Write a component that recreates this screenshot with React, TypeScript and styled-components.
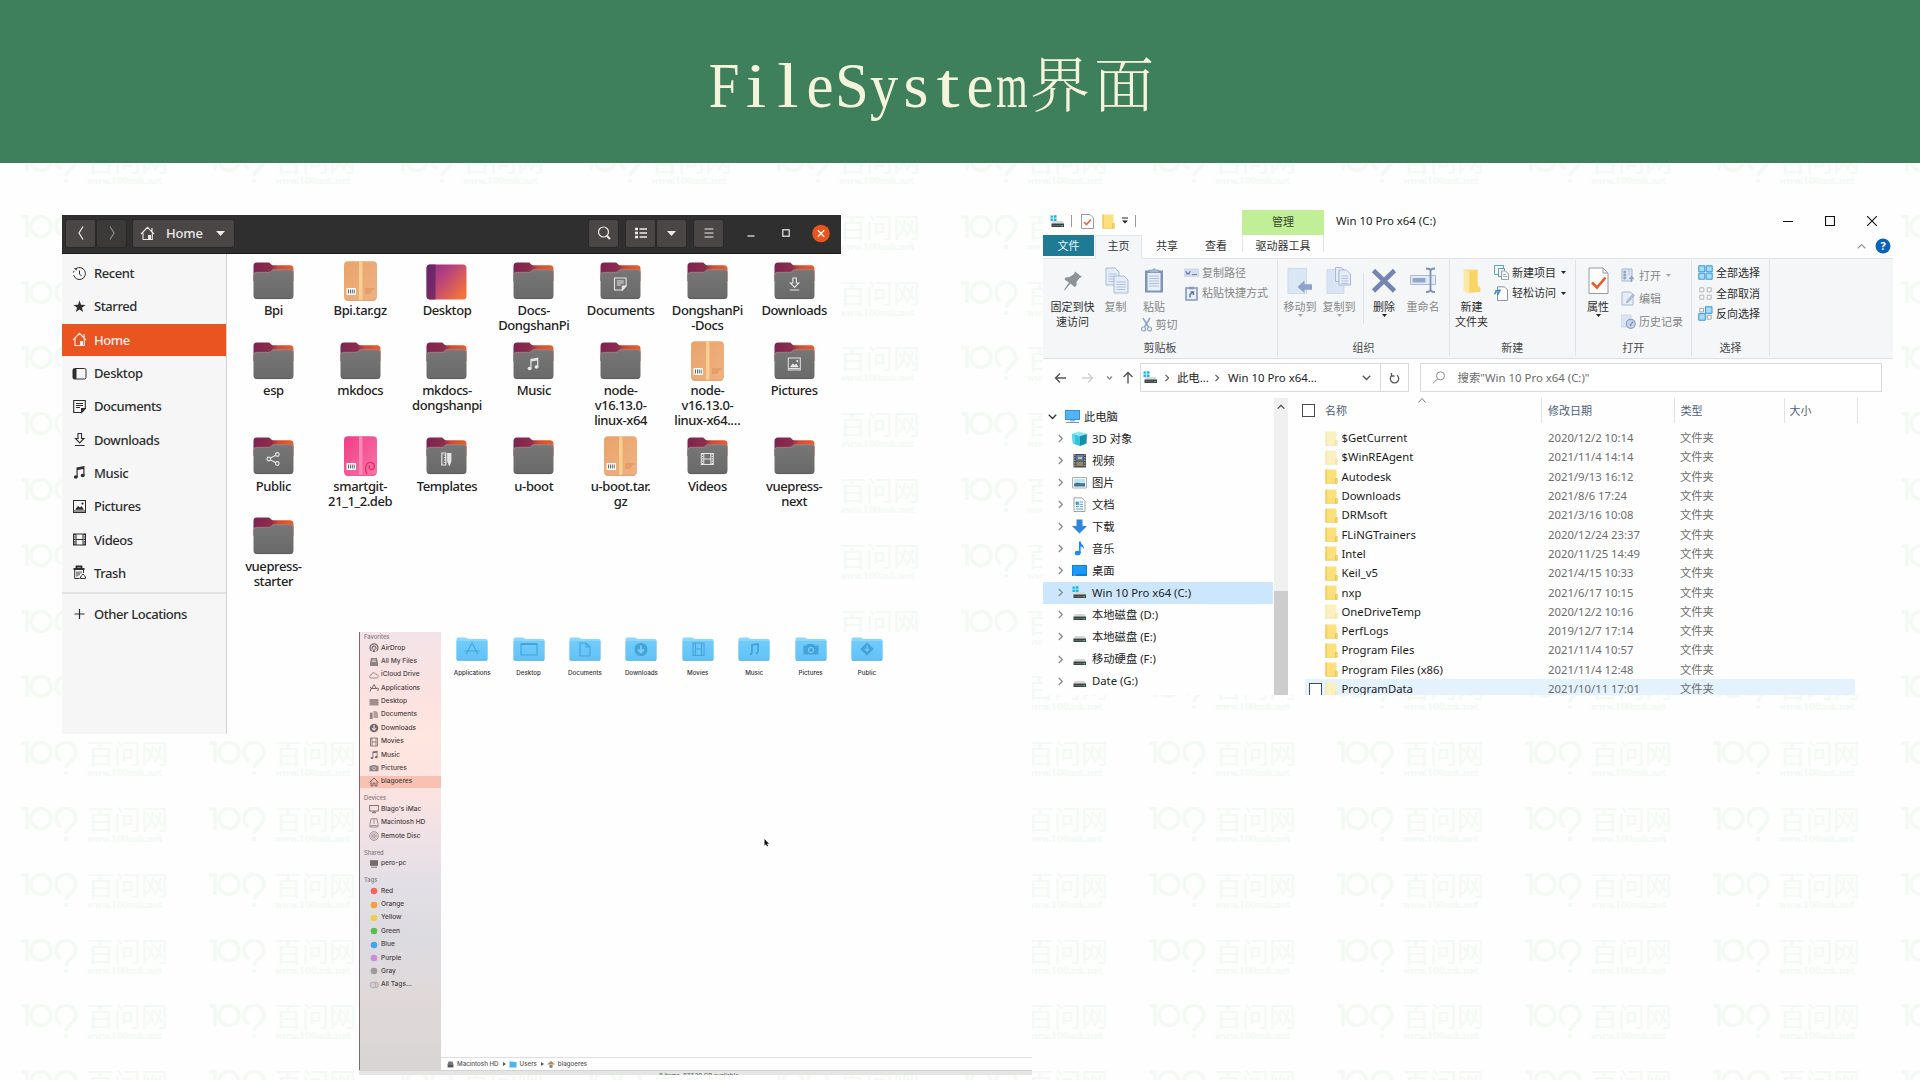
import React from "react";
import styled, { createGlobalStyle } from "styled-components";

const ui = `"Noto Sans", "Noto Sans CJK SC", sans-serif`;
const cjk = `"Noto Sans CJK SC", "Noto Sans", sans-serif`;

const Global = createGlobalStyle`
  * { box-sizing: border-box; }
  body { margin: 0; background: #fefefe; }
  svg { display: block; flex: none; }
`;

const Slide = styled.div`
  position: relative;
  width: 1920px;
  height: 1080px;
  overflow: hidden;
  background: #fefefe;
`;

/* ---------- slide header ---------- */

const Banner = styled.header`
  position: relative;
  height: 163px;
  padding: 46px 0 0 708px;
  background: #3e805b;
  color: #f6f3dc;
  white-space: nowrap;
`;
const Title = styled.h1`
  margin: 0;
  font: 400 64px/80px "Liberation Serif", serif;
  display: flex;
`;
const Letter = styled.span<{ $squeeze?: number }>`
  width: 32px;
  display: flex;
  justify-content: center;
  transform: scaleX(${(p) => p.$squeeze ?? 1});
`;
const Hanzi = styled.span`
  font-family: "Noto Serif CJK SC", "Noto Sans CJK SC", serif;
  font-weight: 300;
  font-size: 60px;
  letter-spacing: 4px;
  margin: -5px 0 0 2px;
`;
const squeeze: Record<string, number> = { F: 0.86, S: 0.95, m: 0.63, y: 0.88, e: 0.95, i: 1.15, l: 1.2, t: 1.3 };

/* ---------- watermark ---------- */

const MarkLayer = styled.div`
  position: absolute;
  left: 21px;
  top: 149px;
  display: grid;
  grid-template-columns: repeat(11, 188px);
  grid-auto-rows: 65.8px;
  color: #f3f9f3;
`;
const Mark = styled.div`
  display: flex;
  gap: 8px;
  white-space: nowrap;
`;
const MarkText = styled.div`
  display: flex;
  flex-direction: column;
  b { font: 400 27px/24px "Noto Sans CJK SC", sans-serif; }
  small { font: 700 9px/11px "DejaVu Serif", serif; letter-spacing: -0.4px; margin-top: 3px; }
`;

const covered = (x1: number, x2: number, y: number) =>
  x1 >= 1920 ||
  (x1 >= 62 && x2 <= 841 && y > 190 && y + 36 < 734) ||
  (x1 >= 359 && x2 <= 1032 && y > 632 && y + 36 < 1075) ||
  (x1 >= 1043 && x2 <= 1893 && y > 190 && y + 36 < 695);

function Watermark() {
  const cells = [];
  for (let r = 0; r < 15; r++)
    for (let c = 0; c < 11; c++) {
      const x = 21 + c * 188;
      const y = 149 + r * 65.8;
      cells.push(
        <Mark key={r + "-" + c}>
          {!covered(x, x + 58, y) || !covered(x + 66, x + 147, y) ? (
            <svg width="58" height="36" viewBox="0 0 58 36" fill="none" stroke="currentColor" strokeWidth="3.6">
              <path d="M0 2H6V22" />
              <circle cx="20" cy="11.5" r="10" />
              <path d="M40 20A10 10 0 1 1 55 12C54.500 19 46 20 45 27" />
              <path d="M43 32H47" />
            </svg>
          ) : null}
          {!covered(x + 66, x + 147, y) && (
            <MarkText>
              <b>百问网</b>
              <small>www.100ask.net</small>
            </MarkText>
          )}
        </Mark>
      );
    }
  return <MarkLayer>{cells}</MarkLayer>;
}

const Window = styled.section<{ $x: number; $y: number; $w: number; $h: number }>`
  position: absolute;
  left: ${(p) => p.$x}px;
  top: ${(p) => p.$y}px;
  width: ${(p) => p.$w}px;
  height: ${(p) => p.$h}px;
  overflow: hidden;
  background: #fefefe;
  display: flex;
  flex-direction: column;
  white-space: nowrap;
`;

/* ---------- Nautilus ---------- */

const NBar = styled.div`
  height: 39px;
  flex: none;
  background: #302f2f;
  border-bottom: 1px solid #1b1a1a;
  display: flex;
  align-items: flex-start;
  padding: 3.5px 11px 0 3px;
`;
const NBtn = styled.div<{ $w: number; $dim?: boolean; $gap?: number }>`
  width: ${(p) => p.$w}px;
  height: 29px;
  margin-left: ${(p) => p.$gap ?? 0}px;
  border-radius: 3px;
  background: ${(p) => (p.$dim ? "#3c3939" : "#4a4646")};
  border: 1px solid #292727;
  color: ${(p) => (p.$dim ? "#8f8d8d" : "#eceaea")};
  display: flex;
  align-items: center;
  justify-content: center;
`;
const PathBtn = styled(NBtn)`
  justify-content: flex-start;
  padding-left: 7px;
  font: 500 13px/26px ${ui};
  letter-spacing: -0.2px;
  span { width: 50px; margin-left: 11px; padding-bottom: 1px; }
`;
const NSpace = styled.div`flex: 1;`;
const NCtl = styled.div<{ $w: number }>`
  width: ${(p) => p.$w}px;
  height: 29px;
  display: flex;
  align-items: center;
  justify-content: center;
  color: #eee;
`;
const NBody = styled.div`
  flex: 1;
  display: flex;
  min-height: 0;
`;
const NSide = styled.nav`
  width: 165px;
  background: #f6f6f6;
  border-right: 1px solid #d4d4d4;
  padding-top: 2.500px;
  font: 500 13px/16px ${ui};
  letter-spacing: -0.42px;
  color: #333;
`;
const NItem = styled.div<{ $on?: boolean }>`
  height: 33.3px;
  padding-left: 10px;
  display: flex;
  align-items: center;
  gap: 7px;
  color: ${(p) => (p.$on ? "#fdeee8" : "#2e2e2e")};
  background: ${(p) => (p.$on ? "linear-gradient(#e95420,#e95420) 0 50%/100% 32px no-repeat" : "none")};
`;
const NRule = styled.div`
  height: 2px;
  margin: 2.500px 0 3px;
  background: #e4e4e4;
`;
const NGrid = styled.div`
  padding: 6.5px 0 0 3px;
  display: grid;
  grid-template-columns: repeat(7, 86.8px);
  grid-auto-rows: max-content;
  row-gap: 7.800px;
`;
const NFile = styled.div`
  display: flex;
  flex-direction: column;
  align-items: center;
`;
const NLabel = styled.div`
  margin-top: 2.500px;
  font: 500 13px/15px ${ui};
  letter-spacing: -0.4px;
  color: #222;
  text-align: center;
  white-space: pre;
`;

const glyphs: Record<string, React.ReactNode> = {
  recent: (<g fill="none" stroke="currentColor"><path d="M4 2.600A6 6 0 1 1 1.600 9M1.400 6.500 2 4.800" /><path d="M7.500 4.500V8L9.500 10" /><path d="M2 2.200 4.600 2v2.800z" fill="currentColor" stroke="none" /></g>),
  star: <path d="M7.500 1.500 9 5.800l4.500.1-3.600 2.800 1.300 4.400-3.700-2.600-3.700 2.600 1.300-4.400L1.500 5.900 6 5.800z" fill="currentColor" />,
  home: (<g fill="none" stroke="currentColor" strokeWidth="1.1"><path d="M1 8 7.500 1.300 14 8M3 6.500V13.500H8M12.300 6.500V13.500H11M12 2v3.500" /><path d="M8 9h3v5H8z" fill="currentColor" stroke="none" /></g>),
  desktop: (<g><rect x="1" y="2.500" width="13" height="10.500" rx="1.500" fill="none" stroke="currentColor" /><path d="M1 3h3.500v10H1z" fill="currentColor" /></g>),
  documents: (<g fill="none" stroke="currentColor" strokeWidth="1.1"><path d="M1.700 1.500h11.600v8L9.500 13.500H1.700z" /><path d="M4 4.500h7M4 6.500h7M4 8.500h4" /><path d="M13 9.500H9.500v4z" fill="currentColor" /></g>),
  downloads: (<g fill="none" stroke="currentColor" strokeWidth="1.100"><path d="M6 1.500h3.500v5H12L7.700 11 3.500 6.500H6zM3 13.500h9.500" /></g>),
  music: (<g fill="currentColor"><path d="M4.500 2.500 12.500 1v9.500h-1.200V4L5.700 5v7H4.500z" /><ellipse cx="3.800" cy="12" rx="2" ry="1.700" /><ellipse cx="10.700" cy="10.500" rx="2" ry="1.700" /></g>),
  pictures: (<g><rect x="1.500" y="1.500" width="12" height="12" fill="none" stroke="currentColor" /><path d="M3.500 10 6 7l2 1.500L9.500 7l2 3v.8h-8z" fill="currentColor" /><circle cx="10.500" cy="4.600" r="1.100" fill="currentColor" /><path d="M2 12h11" stroke="currentColor" /></g>),
  videos: (<g fill="none" stroke="currentColor"><rect x="1.500" y="2" width="12" height="11" /><path d="M4 2v11M11 2v11M4 7.500h7" /><path d="M2.700 2v11M12.400 2v11" strokeDasharray="1.200 1.200" strokeWidth="1.400" /></g>),
  trash: (<g fill="none" stroke="currentColor"><path d="M1.500 4h11M4.500 3V1.500h5V3" strokeWidth="1.800" /><path d="M2.700 5v8.500h5M11.500 5v3M5 6.500v5M7 6.500v4M9 6.500v2" /><path d="M8.500 13.500C8 11 10 11 11 9c1 2 3 2 2.500 4.500z" /></g>),
  plus: <path d="M7.500 3v10M2.500 8h10" stroke="currentColor" fill="none" strokeWidth="1.200" />,
  share: (<g fill="none" stroke="currentColor" strokeWidth="1.200"><circle cx="3" cy="7.500" r="1.800" /><circle cx="11.500" cy="3" r="1.800" /><circle cx="11.500" cy="12" r="1.800" /><path d="M4.700 6.500 10 3.800M4.700 8.500 10 11.300" /></g>),
  templates: (<g fill="none" stroke="currentColor" strokeWidth="1.200"><path d="M3 1.500h4v12H3zM5 3.500h2M5 6h2M5 8.500h2M5 11h2" /><path d="M9 2h3v8l-1.500 3.500L9 10z" fill="currentColor" /></g>),
};
const G = ({ n, s = 15 }: { n: string; s?: number }) => (
  <svg width={s} height={s} viewBox="0 0 15 15">{glyphs[n]}</svg>
);

function UFolder({ emblem }: { emblem?: string }) {
  return (
    <svg width="41" height="40" viewBox="0 0 41 40">
      <path d="M.5 5a3.500 3.500 0 0 1 3.500-3.500h11.500c2 0 2.500 2.800 5 2.800H37a3.500 3.500 0 0 1 3.500 3.500V20H.5z" fill="url(#uback)" />
      <path d="M.5 14.500a3 3 0 0 1 3-3.300H16c2.500 0 2.500-2.700 5-2.700h16.500a3 3 0 0 1 3 3v23a3.500 3.500 0 0 1-3.500 3.500H4A3.500 3.500 0 0 1 .5 34.500z" fill="url(#ufront)" />
      <path d="M1 13.500a2.600 2.600 0 0 1 2.600-2.200H16c2.500 0 2.500-2.600 5-2.600h16.500a3 3 0 0 1 2.800 2" fill="none" stroke="#a98d8d" strokeWidth=".7" />
      <path d="M1.500 36.500Q3 37.600 4.500 37.600h32q2 0 3-1.200" fill="none" stroke="#585858" strokeWidth=".8" />
      {emblem && <g transform="translate(12.800 15.500)" color="#e6e6e6">{glyphs[emblem]}</g>}
    </svg>
  );
}
function Package({ pink }: { pink?: boolean }) {
  return (
    <svg width="41" height="40" viewBox="0 0 41 40">
      <rect x="4" y=".3" width="33" height="39.500" rx="4" fill={pink ? "url(#pkp)" : "url(#pko)"} />
      <rect x="19" y=".3" width="3.500" height="39.500" fill={pink ? "#fa86b4" : "#f8d08f"} />
      <path d="M5.500 38.700q1 .7 3 .7h24q2 0 3-.7" stroke={pink ? "#e0417f" : "#d9935b"} strokeWidth=".7" fill="none" />
      <rect x="6.500" y="27" width="9.500" height="7" fill="#fff" />
      <path d="M8.500 28.500v4M10.500 28.500v4M12.300 28.500v4M14.200 28.500v4" stroke="#555" strokeWidth=".9" />
      {pink ? (
        <path d="M27 38c-3-5-1-12 4-11.500 4 .5 4.500 6 1 7-2.500.5-4-2.500-2-4" fill="none" stroke="#e0306c" strokeWidth="1.300" />
      ) : (
        <path d="M25 28h9.500M25 30h7M25 32h5.500" stroke="#d98a58" strokeWidth=".9" />
      )}
    </svg>
  );
}
const UDesktop = () => (
  <svg width="41" height="40" viewBox="0 0 41 40">
    <rect x=".5" y="3.500" width="40" height="35" rx="3.500" fill="url(#udesk)" />
    <path d="M4 3.500h5.500v35H4A3.500 3.500 0 0 1 .5 35V7A3.500 3.500 0 0 1 4 3.500z" fill="#5e2160" opacity=".75" />
  </svg>
);

const nautilusPlaces = [
  ["recent", "Recent"], ["star", "Starred"], ["home", "Home"], ["desktop", "Desktop"], ["documents", "Documents"],
  ["downloads", "Downloads"], ["music", "Music"], ["pictures", "Pictures"], ["videos", "Videos"], ["trash", "Trash"],
];
const nautilusFiles: [string, string?][] = [
  ["Bpi"], ["Bpi.tar.gz", "pkg"], ["Desktop", "desk"], ["Docs-\nDongshanPi"], ["Documents", "documents"], ["DongshanPi\n-Docs"], ["Downloads", "downloads"],
  ["esp"], ["mkdocs"], ["mkdocs-\ndongshanpi"], ["Music", "music"], ["node-\nv16.13.0-\nlinux-x64"], ["node-\nv16.13.0-\nlinux-x64.…", "pkg"], ["Pictures", "pictures"],
  ["Public", "share"], ["smartgit-\n21_1_2.deb", "deb"], ["Templates", "templates"], ["u-boot"], ["u-boot.tar.\ngz", "pkg"], ["Videos", "videos"], ["vuepress-\nnext"],
  ["vuepress-\nstarter"],
];

function Nautilus() {
  return (
    <Window $x={62} $y={215} $w={779} $h={519}>
      <NBar>
        <NBtn $w={31}><svg width="8" height="14" viewBox="0 0 8 14" fill="none" stroke="currentColor" strokeWidth="1.200"><path d="M6 .5 2 7l4 6.500" /></svg></NBtn>
        <NBtn $w={31} $dim><svg width="8" height="14" viewBox="0 0 8 14" fill="none" stroke="currentColor" strokeWidth="1.200"><path d="M2 .5 6 7l-4 6.500" /></svg></NBtn>
        <PathBtn $w={103} $gap={5}>
          <G n="home" />
          <span>Home</span>
          <svg width="9" height="5" viewBox="0 0 9 5"><path d="M0 0h9L4.500 5z" fill="currentColor" /></svg>
        </PathBtn>
        <NSpace />
        <NBtn $w={31}><svg width="14" height="14" viewBox="0 0 14 14" fill="none" stroke="currentColor" strokeWidth="1.200"><circle cx="6.500" cy="6" r="5" /><path d="m10 10 3 3" strokeWidth="2" /></svg></NBtn>
        <NBtn $w={31} $gap={6}><svg width="12" height="12" viewBox="0 0 12 12" stroke="currentColor"><path d="M0 2h3M0 6h3M0 10h3" strokeWidth="2.600" /><path d="M4.500 2H12M4.500 6H12M4.500 10H12" strokeWidth="1.300" /></svg></NBtn>
        <NBtn $w={31}><svg width="9" height="5" viewBox="0 0 9 5"><path d="M0 0h9L4.500 5z" fill="currentColor" /></svg></NBtn>
        <NBtn $w={31} $gap={6}><svg width="10" height="10" viewBox="0 0 10 10" stroke="currentColor"><path d="M.5 1h9M.5 5h9M.5 9h9" strokeWidth="1.200" /></svg></NBtn>
        <NCtl $w={53}><svg width="8" height="8" viewBox="0 0 8 8"><path d="M.5 7h7" stroke="currentColor" strokeWidth="1.200" /></svg></NCtl>
        <NCtl $w={18}><svg width="8" height="8" viewBox="0 0 8 8"><rect x=".8" y=".8" width="6.400" height="6.400" fill="none" stroke="currentColor" strokeWidth="1.200" /></svg></NCtl>
        <NCtl $w={17} />
        <svg width="18" height="29" viewBox="0 0 18 29"><circle cx="9" cy="14.500" r="8.800" fill="#e95420" /><path d="m5.800 11.300 6.400 6.400m0-6.400-6.400 6.400" stroke="#fff" strokeWidth="1.300" /></svg>
      </NBar>
      <NBody>
        <NSide>
          {nautilusPlaces.map(([i, t]) => (
            <NItem key={t} $on={t === "Home"}><G n={i} />{t}</NItem>
          ))}
          <NRule />
          <NItem><G n="plus" />Other Locations</NItem>
        </NSide>
        <NGrid>
          {nautilusFiles.map(([t, k]) => (
            <NFile key={t}>
              {k === "pkg" ? <Package /> : k === "deb" ? <Package pink /> : k === "desk" ? <UDesktop /> : <UFolder emblem={k} />}
              <NLabel>{t}</NLabel>
            </NFile>
          ))}
        </NGrid>
      </NBody>
    </Window>
  );
}

/* ---------- Finder ---------- */

const FBody = styled.div`
  height: 438px;
  flex: none;
  display: flex;
`;
const FSide = styled.nav`
  width: 82px;
  border-left: 1px solid #7c6a6e;
  padding-top: 1px;
  background: linear-gradient(180deg, #f3e3e8 0, #fbe2e0 60px, #ffe6df 105px, #fde3df 150px, #f4e2e5 190px, #e3dfe6 250px, #dcdbe0 310px, #e0d8d8 370px, #d9d5d5 438px);
  font: 500 6.6px/9px Inter, sans-serif;
  color: #4b4144;
`;
const FHead = styled.div<{ $gap: number }>`
  margin-top: ${(p) => p.$gap}px;
  height: 9.500px;
  padding-left: 4px;
  font-size: 5.800px;
  line-height: 9.500px;
  color: #85787c;
`;
const FItem = styled.div<{ $on?: boolean }>`
  height: 13.360px;
  display: flex;
  align-items: center;
  gap: 2.500px;
  padding-left: 8.500px;
  background: ${(p) => (p.$on ? "linear-gradient(#f9c1b1,#f9c1b1) 0 50%/100% 12px no-repeat" : "none")};
`;
const FMain = styled.div`
  flex: 1;
  display: flex;
  flex-direction: column;
  justify-content: space-between;
`;
const FFiles = styled.div`
  padding: 4px 0 0 3px;
  display: flex;
`;
const FFile = styled.div`
  width: 56.400px;
  display: flex;
  flex-direction: column;
  align-items: center;
  gap: 6px;
  font: 500 6.200px/10px Inter, sans-serif;
  color: #333;
`;
const FPath = styled.div`
  height: 13px;
  border-top: 1px solid #dedede;
  padding-left: 6px;
  display: flex;
  align-items: center;
  gap: 3px;
  font: 500 6.200px/10px Inter, sans-serif;
  color: #555;
`;
const FStatus = styled.div`
  flex: 1;
  background: #e6e5e6;
  border-top: 1px solid #d3d2d3;
  padding: 1px 0 0 300px;
  font: 400 6px/8px Inter, sans-serif;
  color: #555;
`;
const Pointer = styled.svg`
  position: absolute;
  left: 405px;
  top: 207px;
`;

const macGlyph: Record<string, React.ReactNode> = {
  airdrop: <g fill="none" stroke="currentColor"><path d="M2.500 8A4 4 0 1 1 7.500 8M3.500 6.500a2 2 0 1 1 3 0" strokeWidth="1.200" /><path d="m5 5 1.500 4h-3z" fill="currentColor" stroke="none" /></g>,
  allfiles: <g><path d="M2 1h6l1 5v3H1V6z" fill="currentColor" opacity=".8" /><path d="M3 3h4M3 4.500h4" stroke="#fff" strokeWidth=".6" /></g>,
  cloud: <path d="M2.500 8C0 8 .2 5.200 2.200 5 2.300 2.500 6 2 6.800 4.300 9.500 4 10 8 7.500 8z" fill="none" stroke="currentColor" strokeWidth=".7" />,
  apps: <path d="M2.500 6 5 1.500 7.500 6M1.800 5.500h6M1 4l1.500 1L1 8.500M8 5l1.500.5L8.700 8" fill="none" stroke="currentColor" strokeWidth="1" />,
  desk: <path d="M.5 2h9v6.500h-9z" fill="currentColor" opacity=".7" />,
  docs: <g fill="currentColor" opacity=".8"><path d="M.8 2.500h3V9h-3zM4.500 1H7l2 2v5H4.500z" opacity=".7" /><path d="M1 3h2v6H1z" /></g>,
  down: <g><circle cx="5" cy="5" r="4.300" fill="currentColor" /><path d="M5 2v5M3 5.200 5 7.300l2-2.100" stroke="#fff" fill="none" /></g>,
  movies: <path d="M1.500 1h7v8h-7zM3 1v8M7 1v8M3 5h4" fill="none" stroke="currentColor" strokeWidth=".8" />,
  music: <g fill="currentColor"><path d="M3.500 1.500 8.500.7V7h-.8V2.800L4.300 3.300V8h-.8z" /><ellipse cx="3" cy="8" rx="1.400" ry="1.100" /><ellipse cx="7.300" cy="7.200" rx="1.400" ry="1.100" /></g>,
  pics: <g><path d="M.5 2.800h2L3.300 2h3.400l.8.800h2v5.400h-9z" fill="currentColor" opacity=".8" /><circle cx="5" cy="5.300" r="1.500" fill="none" stroke="#fff" strokeWidth=".5" /></g>,
  home: <path d="M.5 5.500 5 1l4.500 4.500M2 4.500V9h2V6h2v3h2V4.500" fill="none" stroke="currentColor" strokeWidth="1" />,
  imac: <g fill="none" stroke="currentColor"><rect x=".7" y="1.500" width="8.600" height="5.500" strokeWidth=".9" /><path d="M5 7v1.500M3 8.700h4" /></g>,
  hd: <g><path d="M2 .8h6l1 5.500V9H1V6.300z" fill="none" stroke="currentColor" strokeWidth=".7" /><path d="M1.500 7.500h7M5 1v5" stroke="currentColor" strokeWidth="1" opacity=".6" /></g>,
  disc: <g fill="none" stroke="currentColor" strokeWidth=".7"><circle cx="5" cy="5" r="4.300" /><circle cx="5" cy="5" r="1.400" /><circle cx="5" cy="5" r="2.800" opacity=".5" /></g>,
  pc: <g fill="currentColor"><path d="M1 1.200h8v5.600H1z" /><path d="M2 7.500h6V9H2z" opacity=".6" /></g>,
  tags: <g fill="#d5ccd2" stroke="#9d9499" strokeWidth=".6"><circle cx="6.500" cy="5" r="2.900" /><circle cx="4" cy="5" r="2.900" /></g>,
};
const MG = ({ n }: { n: string }) => <svg width="10" height="10" viewBox="0 0 10 10" color="#75696b">{n[0] === "#" ? <circle cx="5" cy="5" r="3.300" fill={n} /> : macGlyph[n]}</svg>;

const finderGroups: [string, number, [string, string][]][] = [
  ["Favorites", -1, [["airdrop", "AirDrop"], ["allfiles", "All My Files"], ["cloud", "iCloud Drive"], ["apps", "Applications"], ["desk", "Desktop"], ["docs", "Documents"], ["down", "Downloads"], ["movies", "Movies"], ["music", "Music"], ["pics", "Pictures"], ["home", "blagoeres"]]],
  ["Devices", 4.7, [["imac", "Blago's iMac"], ["hd", "Macintosh HD"], ["disc", "Remote Disc"]]],
  ["Shared", 5, [["pc", "pero-pc"]]],
  ["Tags", 4.5, [["#f4655a", "Red"], ["#f8a035", "Orange"], ["#f6cb43", "Yellow"], ["#5bbd4b", "Green"], ["#3fa5ee", "Blue"], ["#cf8be0", "Purple"], ["#9b9a9d", "Gray"], ["tags", "All Tags..."]]],
];
const emblem: Record<string, React.ReactNode> = {
  Applications: <path d="m10 18 6-11 6 11M8.500 15h15" />,
  Desktop: <path d="M8 7.500h16V19H8zM8 8.500h16" />,
  Documents: <path d="M11 7h6l4 4v9H11zM17 7v4h4" />,
  Downloads: <g><circle cx="16" cy="13.500" r="6" fill="#43a3da" /><path d="M16 9.500v6M13 13.500l3 3 3-3" stroke="#7ccdf6" strokeWidth="1.800" /></g>,
  Movies: <path d="M11 7h11v12.500H11zM13.500 7v12.500M19.500 7v12.500M13.500 13h6" />,
  Music: <path d="M14 17.500V9l6-1.200V16M12 18h2M18 17h2" strokeWidth="1.800" />,
  Pictures: <g><path d="M9 10h3l1-1.500h5l1 1.500h4v8H9z" fill="#43a3da" /><circle cx="16" cy="14" r="2.500" stroke="#7ccdf6" /></g>,
  Public: <g><path d="m16 7 6 6-6 6-6-6z" fill="#43a3da" /><path d="M16 9.500v5M14 13l2 2 2-2" stroke="#7ccdf6" /></g>,
};
const MacFolder = ({ name }: { name: string }) => (
  <svg width="32" height="26" viewBox="0 0 32 26">
    <path d="M.5 3a1.500 1.500 0 0 1 1.500-1.500h8L12.500 3H30a1.500 1.500 0 0 1 1.500 1.500V23a1.500 1.500 0 0 1-1.500 1.500H2A1.500 1.500 0 0 1 .5 23z" fill="#8fd6f9" />
    <path d="M.5 5h31v18a1.500 1.500 0 0 1-1.500 1.500H2A1.500 1.500 0 0 1 .5 23z" fill="url(#mfold)" />
    <path d="M1 24.200h30" stroke="#55aee0" strokeWidth=".7" />
    <g fill="none" stroke="#43a3da" strokeWidth="1.100">{emblem[name]}</g>
  </svg>
);

function Finder() {
  return (
    <Window $x={359} $y={632} $w={673} $h={443}>
      <FBody>
        <FSide>
          {finderGroups.map(([h, gap, items]) => (
            <React.Fragment key={h}>
              <FHead $gap={gap}>{h}</FHead>
              {items.map(([i, t]) => (
                <FItem key={t} $on={t === "blagoeres"}><MG n={i} />{t}</FItem>
              ))}
            </React.Fragment>
          ))}
        </FSide>
        <FMain>
          <FFiles>
            {Object.keys(emblem).map((n) => (
              <FFile key={n}><MacFolder name={n} />{n}</FFile>
            ))}
          </FFiles>
          <FPath>
            <svg width="7" height="7" viewBox="0 0 7 7"><path d="M1.500.5h4l1 3v3h-6v-3z" fill="#777" /><path d="M1 5h5" stroke="#333" /></svg>
            Macintosh HD <svg width="4" height="4" viewBox="0 0 4 4"><path d="m1 0 3 2-3 2z" fill="#555" /></svg>
            <svg width="8" height="7" viewBox="0 0 8 7"><path d="M.5.500h3l.5.500h3.500v5.500h-7z" fill="#4cb4ee" /></svg>
            Users <svg width="4" height="4" viewBox="0 0 4 4"><path d="m1 0 3 2-3 2z" fill="#555" /></svg>
            <svg width="8" height="7" viewBox="0 0 8 7"><path d="M0 3.500 4 0l4 3.500z" fill="#a58a66" /><path d="M2 3.500h4v3H2z" fill="#cdbb9c" /><path d="M3.500 4h1v3h-1z" fill="#6b4d33" /></svg>
            blagoeres
          </FPath>
        </FMain>
      </FBody>
      <FStatus>8 items, 877.29 GB available</FStatus>
      <Pointer width="6" height="8" viewBox="0 0 6 8"><path d="M.5 0 5 4.700H3L4 7l-1 .5-1-2.300L.5 6.500z" fill="#111" /></Pointer>
    </Window>
  );
}

/* ---------- Explorer ---------- */

const Titlebar = styled.div`
  height: 27px;
  flex: none;
  display: flex;
  align-items: center;
  padding: 0 16px 2px 7px;
  font: 400 11.400px/16px ${ui};
  color: #222;
`;
const Quick = styled.div`
  width: 192px;
  padding-top: 1px;
  display: flex;
  align-items: center;
`;
const Bar = styled.i<{ $l: number; $r: number }>`
  width: 1px;
  height: 12px;
  margin: 0 ${(p) => p.$r}px 0 ${(p) => p.$l}px;
  background: #9a9a9a;
`;
const ManageTab = styled.div`
  width: 82px;
  height: 25px;
  margin-top: 4px;
  background: #c0ef98;
  font: 400 11px/22px ${cjk};
  color: #36472b;
  text-align: center;
`;
const WinName = styled.div`
  padding: 0 0 0 12px;
  flex: 1;
`;
const WinBtns = styled.div`
  display: flex;
  gap: 32px;
  color: #111;
`;
const Tabs = styled.div`
  height: 24px;
  flex: none;
  display: flex;
  font: 400 11px/20px ${cjk};
  color: #333;
  border-bottom: 1px solid #e3e6e8;
`;
const Tab = styled.div<{ $w: number; $kind?: string; $gap?: number }>`
  width: ${(p) => p.$w}px;
  height: ${(p) => (p.$kind === "file" ? 21 : 24)}px;
  margin-left: ${(p) => p.$gap ?? 0}px;
  text-align: center;
  ${(p) => p.$kind === "file" && "background:#1f7b95;color:#eef7fa;"}
  ${(p) => p.$kind === "on" && "background:#f4f6f8;border:1px solid #e3e6e8;border-bottom:0;line-height:18px;"}
  ${(p) => p.$kind === "drive" && "background:linear-gradient(#e2e4e2,#e2e4e2) 0 0/1px 17px no-repeat, linear-gradient(#e2e4e2,#e2e4e2) 100% 0/1px 17px no-repeat;"}
`;
const TabTools = styled.div`
  flex: 1;
  display: flex;
  align-items: center;
  justify-content: flex-end;
  gap: 9px;
  padding: 0 2px 1px 0;
`;
const Ribbon = styled.div`
  height: 100px;
  flex: none;
  background: #f4f6f8;
  border-bottom: 1.500px solid #dde0e3;
  display: flex;
  font: 400 11px/15.500px ${cjk};
  color: #333;
`;
const Group = styled.div<{ $w: number }>`
  width: ${(p) => p.$w}px;
  height: 96px;
  margin-top: 1px;
  border-right: 1px solid #e0e3e6;
  display: flex;
  flex-direction: column;
  justify-content: space-between;
`;
const Tools = styled.div<{ $l?: number }>`
  display: flex;
  padding-left: ${(p) => p.$l ?? 0}px;
`;
const Caption = styled.div`
  text-align: center;
  color: #4a4a4a;
  padding-bottom: 1px;
`;
const Big = styled.div<{ $w: number; $off?: boolean }>`
  width: ${(p) => p.$w}px;
  padding-top: 7px;
  display: flex;
  flex-direction: column;
  align-items: center;
  text-align: center;
  white-space: pre;
  color: ${(p) => (p.$off ? "#868686" : "#2e2e2e")};
  > span { margin-top: 4.500px; }
`;
const Col = styled.div<{ $h: number; $t: number; $l?: number }>`
  display: grid;
  grid-auto-rows: ${(p) => p.$h}px;
  padding: ${(p) => p.$t}px 0 0 ${(p) => p.$l ?? 0}px;
  align-items: center;
`;
const Small = styled.div<{ $off?: boolean }>`
  display: flex;
  align-items: center;
  gap: 3px;
  color: ${(p) => (p.$off ? "#868686" : "#2e2e2e")};
  > svg + svg, > span { margin-left: 2px; }
`;
const CutRow = styled(Small)`
  margin-top: 3px;
  padding-left: 9px;
  gap: 1px;
`;
const Split = styled.i`
  width: 1px;
  height: 51px;
  margin: 13px 1px 0 4px;
  background: #dfe2e5;
`;

const AddressRow = styled.div`
  height: 39px;
  flex: none;
  padding: 4px 11px 6px 11px;
  display: flex;
  align-items: center;
  font: 400 11.400px/16px ${ui};
  color: #222;
`;
const NavKeys = styled.div`
  width: 86px;
  display: flex;
  align-items: center;
`;
const Field = styled.div<{ $w: number; $ml?: number }>`
  width: ${(p) => p.$w}px;
  height: 29px;
  margin-left: ${(p) => p.$ml ?? 0}px;
  border: 1px solid #d9d9d9;
  background: #fff;
  display: flex;
  align-items: center;
`;
const Crumb = styled.span<{ $w: number }>`
  width: ${(p) => p.$w}px;
`;
const Refresh = styled.div`
  width: 28px;
  height: 27px;
  border-left: 1px solid #d9d9d9;
  display: flex;
  align-items: center;
  justify-content: center;
`;
const Hint = styled.span`
  margin-left: 12px;
  color: #6c6c6c;
`;
const Panes = styled.div`
  flex: 1;
  display: flex;
  min-height: 0;
`;
const Tree = styled.div`
  width: 230px;
  padding-top: 7.500px;
  font: 400 11.300px/16px ${ui};
  color: #222;
`;
const Node = styled.div<{ $on?: boolean; $root?: boolean }>`
  height: 22.050px;
  padding-left: ${(p) => (p.$root ? 5 : 13)}px;
  display: flex;
  align-items: center;
  gap: ${(p) => (p.$root ? 4 : 5)}px;
  background: ${(p) => (p.$on ? "#cce6fd" : "transparent")};
  > svg:first-child { margin-right: ${(p) => (p.$root ? 4 : 2)}px; }
`;
const Scroll = styled.div`
  width: 14px;
  margin-left: 1px;
  background: #f0f0f0;
  display: flex;
  flex-direction: column;
  align-items: center;
  padding-top: 5px;
`;
const Thumb = styled.div`
  width: 14px;
  margin-top: 180px;
  flex: 1;
  background: #cdcdcd;
`;
const List = styled.div`
  flex: 1;
  min-width: 0;
  font: 400 11.300px/16px ${ui};
  color: #6d6d6d;
  padding-left: 15px;
`;
const Heads = styled.div`
  height: 30.500px;
  display: flex;
  align-items: flex-start;
  font: 400 11px/25px ${cjk};
  color: #4c607a;
`;
const HeadCell = styled.div<{ $w: number; $l: number }>`
  width: ${(p) => p.$w}px;
  height: 25px;
  padding-left: ${(p) => p.$l}px;
  border-right: 1px solid #e2e2e2;
  display: flex;
  align-items: center;
`;
const SortMark = styled.svg`
  align-self: flex-start;
  margin: 0 0 0 71px;
`;
const Row = styled.div<{ $on?: boolean }>`
  width: 550px;
  height: 19.310px;
  margin-left: 2px;
  display: grid;
  grid-template-columns: 20px 16.500px 206.500px 132px 1fr;
  align-items: center;
  background: ${(p) => (p.$on ? "#e4f2fd" : "transparent")};
  b { font-weight: 400; color: #1c1c1c; }
`;
const Check = styled.i<{ $l: number; $t?: number }>`
  width: 13px;
  height: 13px;
  margin: ${(p) => p.$t ?? 0}px 0 0 ${(p) => p.$l}px;
  border: 1px solid #4a4a4a;
  background: #fff;
  flex: none;
`;

const Drive = ({ win, s = 15 }: { win?: boolean; s?: number }) => (
  <svg width={s} height={s} viewBox="0 0 15 15">
    {win && <path d="M.5 1.500h2.400v2.300H.5zM3.700 1.200h2.800v2.600H3.700zM.5 4.600h2.400v2.300H.5zM3.700 4.600h2.800v2.600H3.700z" fill="#18b5ea" />}
    <path d="M3 7h9.500L14 9.500H1.500z" fill="#d6d8d9" />
    <path d="M1.500 9.500H14V13H1.500z" fill="#3b4342" />
    <path d="M2.500 11.500h9" stroke="#6a7371" strokeWidth=".8" />
    <path d="M11.500 11h1.500v1.200h-1.500z" fill="#36e06c" />
  </svg>
);
const YFolder = ({ pale, w = 13, h = 15 }: { pale?: boolean; w?: number; h?: number }) => (
  <svg width={w} height={h} viewBox="0 0 13 15">
    <path d="M.5.500h11v14H.5z" fill={pale ? "#fbf0c0" : "#fddf7c"} />
    <path d="M.5.500h1.200v14H.5z" fill={pale ? "#f5e6a8" : "#efc344"} />
    <path d="M.5 13.800h11v.7H.5z" fill={pale ? "#f3e3a6" : "#efc85a"} />
    <path d="M10.500 9.500h1.800v4.800h-1.800z" fill={pale ? "#faedb8" : "#fbd768"} stroke={pale ? "#efdf9f" : "#e6b93f"} strokeWidth=".6" />
  </svg>
);
const Down = ({ c = "#222", w = 5 }: { c?: string; w?: number }) => <svg width={w} height="3" viewBox="0 0 5 3"><path d="M0 0h5L2.500 3z" fill={c} /></svg>;
const Menu = ({ c }: { c?: string }) => <span><Down c={c} /></span>;
const Chev = ({ d, c = "#8a8a8a", w = 9 }: { d: string; c?: string; w?: number }) => <svg width={w} height={w} viewBox="0 0 9 9" fill="none" stroke={c} strokeWidth="1.300"><path d={d} /></svg>;
const RIGHT = "m2.800 1 3.500 3.500-3.500 3.500", DOWN = "m.8 2.800 3.700 3.700 3.700-3.700", UP = "m.8 6.300 3.700-3.700 3.700 3.700";

const page = (x: number, y: number, w: number, h: number, k: string) => (
  <g key={k}><path d={`M${x} ${y}h${w - 4}l4 4v${h - 4}h-${w}z`} fill="#e4ecf8" stroke="#a3b4d3" strokeWidth=".9" /><path d={`M${x + 2.500} ${y + 6}h${w - 5}M${x + 2.500} ${y + 8.500}h${w - 5}M${x + 2.500} ${y + 11}h${w - 5}M${x + 2.500} ${y + 13.500}h${w - 5}`} stroke="#afbfda" strokeWidth=".9" /></g>
);
const big: Record<string, React.ReactNode> = {
  pin: <path d="m15 4.500 7 5.500-2.500 1-3 4 0 3.500-2 1.500-4-3.500-5.500 6.500-1 .5.500-1.500 4.500-6.500-4.500-3 1-2 4-.5 4.500-3z" fill="#8c9499" />,
  copy: <g>{page(3, 1, 13, 17, "a")}{page(11, 9, 14, 17, "b")}</g>,
  paste: <g><path d="M4 3.500h18v22H4z" fill="#7f93bb" /><path d="M6.500 6h13v17.500h-13z" fill="#e9eff9" /><path d="M8 5.500V3h3.200a2 2 0 0 1 3.600 0H18v2.500z" fill="#a9b7d1" stroke="#8194b8" strokeWidth=".6" /><path d="M8 9h10M8 11.500h10M8 14h10M8 16.500h10M8 19h10" stroke="#a8b8d6" strokeWidth=".9" /></g>,
  moveto: <g><path d="M1 1.500h18.500v25H1z" fill="#dbe6f5" stroke="#cddbee" /><path d="m10.500 20 7-6.500v3.800H25v5.400h-7.500V26z" fill="#8ea3c9" /></g>,
  copyto: <g><path d="M1 2.500h17v24H1z" fill="#d9e4f4" stroke="#cddbee" />{page(9.500, .5, 10, 14, "a")}{page(13, 3, 11.500, 15, "b")}</g>,
  del: <path d="m2.500 3.500 21 20.500M23.500 3.500l-21 20.500" stroke="#7486b0" strokeWidth="4.600" />,
  ren: <g fill="none"><path d="M.5 8.500h25v9H.5z" fill="#e3ebf7" stroke="#abbad6" /><path d="M2.500 11h13v4.500h-13z" fill="#92a5ca" /><path d="M16 1.500q4.500 0 4.500 2.500v18q0 3-4.500 3M25 1.500q-4.500 0-4.500 2.500v18q0 3 4.500 3" stroke="#7e91b8" strokeWidth="1.800" /></g>,
  newf: <g><path d="M4.500 2.500h14V19l2.500.5V25H9z" fill="#fbdc7c" /><path d="M4.500 2.500 10.500 5v22l-6-3z" fill="#fbe9a8" /><path d="M10.500 5l8-2v17.500l3 .5v3.500l-11 1.500z" fill="#f8d467" /></g>,
  prop: <g><path d="M4 1h14l5 5v20.500H4z" fill="#fdfdfd" stroke="#9a9a9a" /><path d="M18 1v5h5" fill="none" stroke="#9a9a9a" /><path d="m7 15.500 5 5 8.500-10" fill="none" stroke="#ee5a24" strokeWidth="2.600" /></g>,
};
const B = ({ n }: { n: string }) => <svg width="26" height="27" viewBox="0 0 26 27">{big[n]}</svg>;

const tiny: Record<string, React.ReactNode> = {
  path: <g><path d="M.5 4h14v7.500H.5z" fill="#d4dff0" stroke="#c0cee6" strokeWidth=".6" /><path d="m2 6 1 3.500 1-2 1 2L6.200 6M8 9.500h5" fill="none" stroke="#6b80ab" /></g>,
  shortcut: <g><path d="M2 2h11v12H2z" fill="#eaf0f9" stroke="#8497bd" strokeWidth="1.600" /><path d="M5 .8h5v2.500H5z" fill="#8497bd" /><path d="M6 11.500V8.500l3-2M6.500 6h3v3" fill="none" stroke="#5d76aa" strokeWidth="1.500" /></g>,
  cut: <g fill="none" stroke="#8fa4c4" strokeWidth="1.500"><path d="m3 1 5.500 9M10 1 4.500 10" /><circle cx="3.500" cy="12" r="2" strokeWidth="1.200" /><circle cx="9.500" cy="12" r="2" strokeWidth="1.200" /></g>,
  newi: <g fill="#f4f8fa" strokeWidth=".9"><path d="M.5.500h9v9h-9z" stroke="#3fa0b5" /><path d="M4.500 3.500h6v8h-6z" stroke="#5d8fa0" /><path d="M7.500 6h4l3 3v5.500h-7z" stroke="#8f979c" /><path d="M9 9.500h3M9 11.500h4" stroke="#9aa" /></g>,
  easy: <g><path d="M3.500.800h7l3 3V14.500h-10z" fill="#fbfcfd" stroke="#8b9298" /><path d="M.5 8 3 4.500h3.500M1 5l5-.8L3.500 9" fill="none" stroke="#3a86c8" strokeWidth="1.500" /></g>,
  open: <g><path d="M1 1h10v12H1z" fill="#e0e8f4" stroke="#a5b5d0" /><path d="M2.800 3h2v2h-2zM2.800 6h2v2h-2zM2.800 9h2v2h-2zM6.500 3h3M6.500 6h3" fill="#7c8fb5" stroke="#9fb0cd" strokeWidth=".7" /><path d="M10.500 14V9M8.300 11l2.200-2.200 2.200 2.200" fill="none" stroke="#8da1c8" strokeWidth="1.500" /></g>,
  edit: <g><path d="M1 1h8.500l2.500 2.500V14H1z" fill="#e6edf7" stroke="#a9b9d4" /><path d="m5.500 12 .5-2.500L12 3l1.500 1.500-6 6.500z" fill="#b3c3dd" stroke="#90a4c8" strokeWidth=".6" /></g>,
  hist: <g><path d="M0 1h10v12H0z" fill="#dbe4f2" stroke="#c0cde2" strokeWidth=".7" /><circle cx="9.800" cy="9.800" r="4.500" fill="#c4d1e6" stroke="#8ca0c6" strokeWidth="1.200" /><path d="M9.800 12V9.800l2.500-2" fill="none" stroke="#607aaa" /></g>,
  all: <g fill="#a4dcff" stroke="#3195d8"><path d="M.8.800h6v6h-6zM8.200.800h6v6h-6zM.8 8.200h6v6h-6zM8.200 8.200h6v6h-6z" /></g>,
  none: <g fill="#fafafa" stroke="#b2b4b6"><path d="M1.800 1.800h4v4h-4zM9.200 1.800h4v4h-4zM1.800 9.200h4v4h-4zM9.200 9.200h4v4h-4z" /></g>,
  inv: <g><path d="M7.500.800h6.500v6.500H7.500zM.8 7.700h6.500v6.500H.8z" fill="#a4dcff" stroke="#3195d8" /><path d="M1.800 2.300h3.700v3.700H1.800zM9.200 9.200h4v4h-4z" fill="#fafafa" stroke="#a2a4a6" /></g>,
  pc: <g><path d="M0 1h15v10H0z" fill="#2f93dd" /><path d="M1 2h13v8H1z" fill="#52b4f4" /><path d="M5 11h5v1.500H5z" fill="#8ab7d6" /><path d="M1 13.500h13" stroke="#7398b5" /></g>,
  cube: <g><path d="m0 3 7-2.500L15 3l-7 2z" fill="#8fe6f2" /><path d="M0 3l8 2v10l-7-2.500z" fill="#33c3dc" /><path d="M15 3 8 5v10l6.500-2.500z" fill="#1591ab" /><path d="m0 3 3-.8v11L.8 12z" fill="#63d8e8" /></g>,
  film: <g><path d="M1.500 1h12.500v13.500H1.500z" fill="#4a4a52" /><path d="M4.300 2h7v5.500h-7z" fill="#5a7fd0" /><path d="M4.300 8.500h7V13h-7z" fill="#8f8a5c" /><path d="M6 4h4v2H6z" fill="#d8c15a" /><path d="M2.800 1.500v13M12.800 1.500v13" stroke="#c7c9cc" strokeDasharray="1.300 1.300" /></g>,
  pic: <g><path d="M.5 2.500h14v10.500H.5z" fill="#fff" stroke="#a7aeb4" /><path d="M2 4h11v7.500H2z" fill="#bfe3f7" /><path d="M2 9c3-3 5 0 11-1v3.500H2z" fill="#3e7791" /></g>,
  doc: <g><path d="M2 .8h8l3 3V14.500H2z" fill="#fdfefe" stroke="#98a4ad" /><path d="M4 5h2.500v2.500H4zM4 9.500h3M4 12h7" stroke="#4aa0da" fill="#4aa0da" /><path d="M7.500 5H11M7.500 7.300H11M8 9.700h3" stroke="#4aa0da" /></g>,
  down: <path d="M4.500.500h6V7H15l-7.500 7.500L0 7h4.500z" fill="#2d86dc" />,
  note: <g fill="#1a8df0"><path d="M7 .5h1.700C9 3.500 12.500 4 12 8.500c-.5-2-2-3-3.300-3V12H7z" /><ellipse cx="5.700" cy="12" rx="3" ry="2.300" /></g>,
  desk: <g><path d="M0 2h15v11H0z" fill="#0c7fd8" /><path d="M.8 2.800h13.400v8.200H.8z" fill="#1b9bf7" /><path d="M1.500 12h2" stroke="#bfe1fa" strokeWidth=".7" /></g>,
};
const T = ({ n }: { n: string }) => (n === "drive" ? <Drive /> : n === "win" ? <Drive win /> : <svg width="15" height="15" viewBox="0 0 15 15">{tiny[n]}</svg>);

const tree = [
  ["cube", "3D 对象"], ["film", "视频"], ["pic", "图片"], ["doc", "文档"], ["down", "下载"], ["note", "音乐"], ["desk", "桌面"],
  ["win", "Win 10 Pro x64 (C:)"], ["drive", "本地磁盘 (D:)"], ["drive", "本地磁盘 (E:)"], ["drive", "移动硬盘 (F:)"], ["drive", "Date (G:)"],
];
const rows: [string, string, boolean?][] = [
  ["$GetCurrent", "2020/12/2 10:14", true], ["$WinREAgent", "2021/11/4 14:14", true], ["Autodesk", "2021/9/13 16:12"], ["Downloads", "2021/8/6 17:24"],
  ["DRMsoft", "2021/3/16 10:08"], ["FLiNGTrainers", "2020/12/24 23:37"], ["Intel", "2020/11/25 14:49"], ["Keil_v5", "2021/4/15 10:33"],
  ["nxp", "2021/6/17 10:15"], ["OneDriveTemp", "2020/12/2 10:16", true], ["PerfLogs", "2019/12/7 17:14"], ["Program Files", "2021/11/4 10:57"],
  ["Program Files (x86)", "2021/11/4 12:48"], ["ProgramData", "2021/10/11 17:01", true],
];

function Explorer() {
  return (
    <Window $x={1043} $y={208} $w={850} $h={487}>
      <Titlebar>
        <Quick>
          <Drive win /><Bar $l={6} $r={9} />
          <svg width="13" height="15" viewBox="0 0 13 15"><path d="M.5.500h8.500l3.500 3.500v10.500H.5z" fill="#fff" stroke="#9b9b9b" /><path d="m3 8 2.500 2.500L10 5.500" fill="none" stroke="#e8643a" strokeWidth="1.600" /></svg>
          <svg width="8" height="1" /><YFolder />
          <svg width="20" height="8" viewBox="0 0 20 8"><path d="M7 1h6" stroke="#222" /><path d="M7 3.500h6L10 6.500z" fill="#222" /></svg>
          <Bar $l={0} $r={0} />
        </Quick>
        <ManageTab>管理</ManageTab>
        <WinName>Win 10 Pro x64 (C:)</WinName>
        <WinBtns>
          <svg width="10" height="10" viewBox="0 0 10 10"><path d="M0 5.500h10" stroke="currentColor" /></svg>
          <svg width="10" height="10" viewBox="0 0 10 10"><path d="M.5.500h9v9h-9z" fill="none" stroke="currentColor" strokeWidth="1.200" /></svg>
          <svg width="10" height="10" viewBox="0 0 10 10"><path d="m0 0 10 10M10 0 0 10" stroke="currentColor" strokeWidth="1.100" /></svg>
        </WinBtns>
      </Titlebar>
      <Tabs>
        <Tab $w={51} $kind="file">文件</Tab>
        <Tab $w={47} $gap={1} $kind="on">主页</Tab>
        <Tab $w={50}>共享</Tab>
        <Tab $w={48}>查看</Tab>
        <Tab $w={82} $gap={2} $kind="drive">驱动器工具</Tab>
        <TabTools>
          <Chev d={UP} c="#9a9a9a" />
          <svg width="16" height="16" viewBox="0 0 16 16"><circle cx="8" cy="8" r="7.500" fill="#0b62b8" /><text x="8" y="12" textAnchor="middle" fontSize="11" fontWeight="700" fontFamily="Noto Sans, sans-serif" fill="#fff">?</text></svg>
        </TabTools>
      </Tabs>
      <Ribbon>
        <Group $w={235}>
          <Tools>
            <Big $w={59}><B n="pin" /><span>{"固定到快\n速访问"}</span></Big>
            <Big $w={27} $off><B n="copy" /><span>复制</span></Big>
            <Big $w={50} $off><B n="paste" /><span>粘贴</span><CutRow $off><T n="cut" />剪切</CutRow></Big>
            <Col $h={20.3} $t={2.8} $l={5}>
              <Small $off><T n="path" />复制路径</Small>
              <Small $off><T n="shortcut" />粘贴快捷方式</Small>
            </Col>
          </Tools>
          <Caption>剪贴板</Caption>
        </Group>
        <Group $w={172}>
          <Tools $l={2.5}>
            <Big $w={39} $off><B n="moveto" /><span>移动到</span><Down c="#aaa" /></Big>
            <Big $w={39} $off><B n="copyto" /><span>复制到</span><Down c="#aaa" /></Big>
            <Split />
            <Big $w={39}><B n="del" /><span>删除</span><Down /></Big>
            <Big $w={39} $off><B n="ren" /><span>重命名</span></Big>
          </Tools>
          <Caption>组织</Caption>
        </Group>
        <Group $w={125.5}>
          <Tools>
            <Big $w={43}><B n="newf" /><span>{"新建\n文件夹"}</span></Big>
            <Col $h={20.3} $t={2.8} $l={1}>
              <Small><T n="newi" />新建项目<Menu /></Small>
              <Small><T n="easy" />轻松访问<Menu /></Small>
            </Col>
          </Tools>
          <Caption>新建</Caption>
        </Group>
        <Group $w={116.5}>
          <Tools>
            <Big $w={45}><B n="prop" /><span>属性</span><Down /></Big>
            <Col $h={23} $t={4} $l={0.5}>
              <Small $off><T n="open" />打开<Menu c="#aaa" /></Small>
              <Small $off><T n="edit" />编辑</Small>
              <Small $off><T n="hist" />历史记录</Small>
            </Col>
          </Tools>
          <Caption>打开</Caption>
        </Group>
        <Group $w={78}>
          <Tools>
            <Col $h={20.4} $t={2.8} $l={6}>
              <Small><T n="all" />全部选择</Small>
              <Small><T n="none" />全部取消</Small>
              <Small><T n="inv" />反向选择</Small>
            </Col>
          </Tools>
          <Caption>选择</Caption>
        </Group>
      </Ribbon>
      <AddressRow>
        <NavKeys>
          <svg width="84" height="14" viewBox="0 0 84 14" fill="none" stroke="#555" strokeWidth="1.400">
            <path d="M12 7H1.500M6 2.500 1.500 7 6 11.500" />
            <path d="M28 7h10.500M34 2.500 38.500 7 34 11.500" stroke="#cfcfcf" />
            <path d="m53 5.500 2.500 2.500L58 5.500" stroke="#888" />
            <path d="M74 12.500V1.500M69.500 6 74 1.500 78.500 6" />
          </svg>
        </NavKeys>
        <Field $w={269}>
          <Crumb $w={2} /><Drive win /><Crumb $w={5} /><Chev d={RIGHT} c="#555" w={8} /><Crumb $w={6} />
          <Crumb $w={36}>此电...</Crumb><Chev d={RIGHT} c="#555" w={8} /><Crumb $w={7} />
          <Crumb $w={134}>Win 10 Pro x64...</Crumb><Chev d={DOWN} c="#555" /><NSpace />
          <Refresh><svg width="11" height="12" viewBox="0 0 11 12" fill="none" stroke="#555" strokeWidth="1.300"><path d="M3 3.300A4.200 4.200 0 1 0 8 3.300M2.500 1v3h3" /></svg></Refresh>
        </Field>
        <Field $w={463} $ml={11}>
          <svg width="25" height="13" viewBox="0 0 25 13" fill="none" stroke="#8a8a8a"><circle cx="19.500" cy="4.800" r="4" /><path d="m16.500 7.800-4.500 4.500" /></svg>
          <Hint>搜索"Win 10 Pro x64 (C:)"</Hint>
        </Field>
      </AddressRow>
      <Panes>
        <Tree>
          <Node $root><Chev d={DOWN} c="#333" /><T n="pc" />此电脑</Node>
          {tree.map(([i, t]) => (
            <Node key={t} $on={i === "win"}><Chev d={RIGHT} /><T n={i} />{t}</Node>
          ))}
        </Tree>
        <Scroll><Chev d={UP} c="#444" w={8} /><Thumb /></Scroll>
        <List>
          <Heads>
            <Check $l={-1} $t={6} />
            <HeadCell $w={227} $l={10}>名称<SortMark width="8" height="5" viewBox="0 0 8 5" fill="none" stroke="#777"><path d="m.5 4.500 3.500-4 3.500 4" /></SortMark></HeadCell>
            <HeadCell $w={132.5} $l={6}>修改日期</HeadCell>
            <HeadCell $w={110} $l={6}>类型</HeadCell>
            <HeadCell $w={73.5} $l={5}>大小</HeadCell>
          </Heads>
          {rows.map(([n, d, pale]) => (
            <Row key={n} $on={n === "ProgramData"}>
              {n === "ProgramData" ? <Check $l={4} /> : <span />}
              <YFolder pale={pale} /><b>{n}</b><span>{d}</span><span>文件夹</span>
            </Row>
          ))}
        </List>
      </Panes>
    </Window>
  );
}

const Defs = () => (
  <svg width="0" height="0">
    <defs>
      <linearGradient id="uback"><stop offset="0" stopColor="#7c2350" /><stop offset=".45" stopColor="#8f2d4c" /><stop offset=".6" stopColor="#cf4a35" /><stop offset="1" stopColor="#e95f2a" /></linearGradient>
      <linearGradient id="ufront" x1="0" y1="0" x2="0" y2="1"><stop offset="0" stopColor="#777" /><stop offset="1" stopColor="#696969" /></linearGradient>
      <linearGradient id="udesk" x1="0" y1="0" x2="1" y2=".8"><stop offset="0" stopColor="#8e2f86" /><stop offset=".4" stopColor="#b5417f" /><stop offset="1" stopColor="#f4743b" /></linearGradient>
      <linearGradient id="pko" x1="0" y1="0" x2="1" y2="1"><stop offset="0" stopColor="#e9a36b" /><stop offset="1" stopColor="#efb283" /></linearGradient>
      <linearGradient id="pkp" x1="0" y1="0" x2="1" y2="1"><stop offset="0" stopColor="#f23c86" /><stop offset="1" stopColor="#f776a8" /></linearGradient>
      <linearGradient id="mfold" x1="0" y1="0" x2="0" y2="1"><stop offset="0" stopColor="#70cbfa" /><stop offset="1" stopColor="#62c2f6" /></linearGradient>
    </defs>
  </svg>
);

export default function App() {
  return (
    <Slide>
      <Global />
      <Watermark />
      <Banner>
        <Title>
          {"FileSystem".split("").map((c, i) => (
            <Letter key={i} $squeeze={squeeze[c]}>{c}</Letter>
          ))}
          <Hanzi>界面</Hanzi>
        </Title>
      </Banner>
      <Nautilus />
      <Finder />
      <Explorer />
      <Defs />
    </Slide>
  );
}
